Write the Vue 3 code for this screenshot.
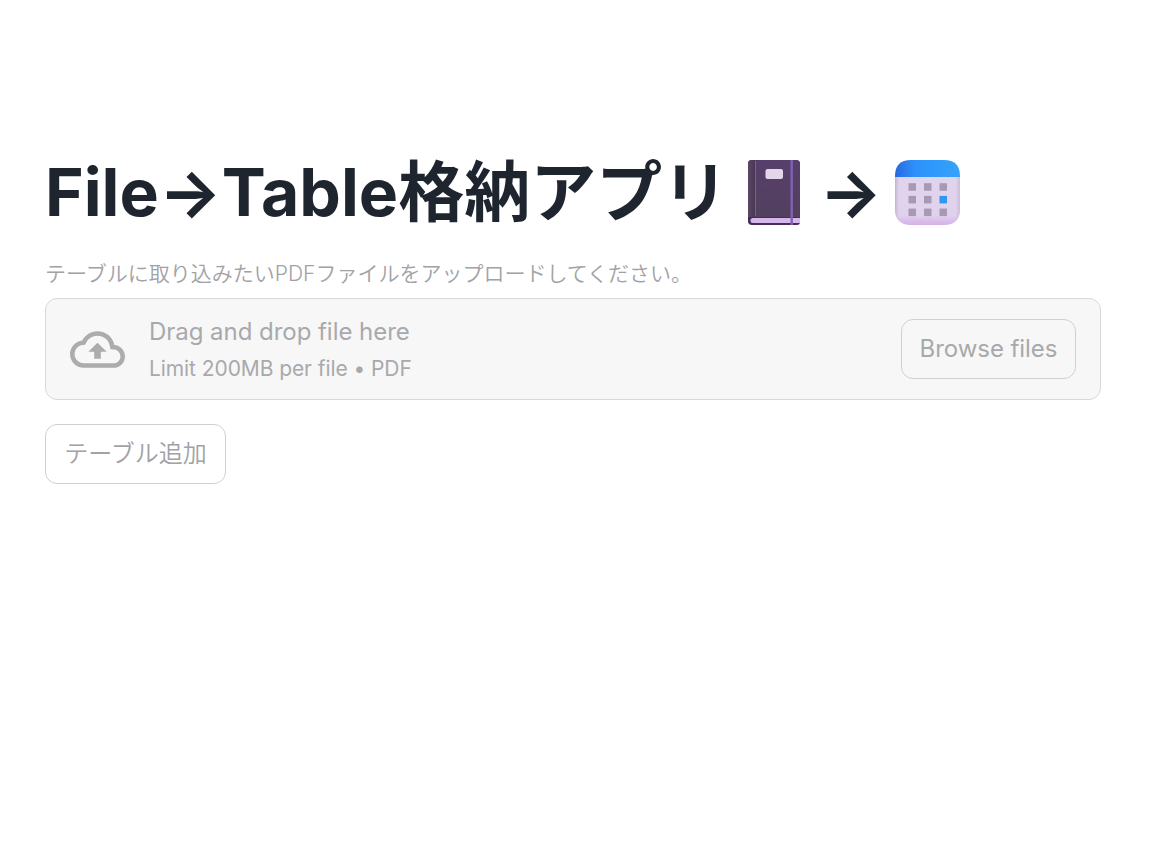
<script setup>
import {ref} from 'vue';

const title = ref('File→Table格納アプリ');
const uploadLabel = ref('テーブルに取り込みたいPDFファイルをアップロードしてください。');

// 달력 아이콘의 날짜 칸
const days = [0, 1, 2, 3, 4, 5, 6, 7, 8].map((i) => ({
  x: 13.5 + (i % 3) * 15.5,
  y: 23.2 + Math.floor(i / 3) * 12.7,
  active: i === 5,
}));
</script>

<template>
  <main class="page">
    <h1 class="title">
      <span>{{ title }}</span>
      <svg class="book" viewBox="0 0 52 65" aria-hidden="true">
        <defs>
          <linearGradient id="cover" x1="0" y1="0" x2="0" y2="1">
            <stop offset="0" stop-color="#573f6c" />
            <stop offset="1" stop-color="#52405e" />
          </linearGradient>
          <linearGradient id="spine" x1="0" y1="0" x2="1" y2="0">
            <stop offset="0" stop-color="#5a4963" />
            <stop offset="1" stop-color="#493654" />
          </linearGradient>
        </defs>
        <path d="M4 0H48Q52 0 52 4V62Q52 65 49 65H4Q0 65 0 61V4Q0 0 4 0Z" fill="#482b5c" />
        <path d="M4 0H48Q52 0 52 4V57H0V4Q0 0 4 0Z" fill="url(#cover)" />
        <path d="M4 0H7V57H0V4Q0 0 4 0Z" fill="url(#spine)" />
        <path d="M7.5 1V56" stroke="#81708b" stroke-width=".8" />
        <path d="M52 58H5Q2.5 58 2.5 60.5T5 63H52Z" fill="#d5b7eb" />
        <rect x="17.5" y="9" width="17.5" height="10" rx="2" fill="#e2d6e9" />
        <path d="M43.7 0V65" stroke="#8260b5" stroke-width="2.4" />
      </svg>
      <span class="arrow">→</span>
      <svg class="calendar" viewBox="0 0 65 65" aria-hidden="true">
        <defs>
          <linearGradient id="header" x1="0" y1="0" x2="1" y2="0">
            <stop offset="0" stop-color="#2868df" />
            <stop offset=".3" stop-color="#2c91fb" />
            <stop offset="1" stop-color="#35a3fb" />
          </linearGradient>
          <linearGradient id="sheet" x1="0" y1="0" x2="0" y2="1">
            <stop offset="0" stop-color="#e0d4ec" />
            <stop offset=".8" stop-color="#e1d2ec" />
            <stop offset="1" stop-color="#d3b1e9" />
          </linearGradient>
          <linearGradient id="edge" x1="0" y1="0" x2="1" y2="0">
            <stop offset="0" stop-color="#a99ab4" stop-opacity=".6" />
            <stop offset=".07" stop-color="#c9bcd4" stop-opacity="0" />
            <stop offset=".93" stop-color="#c9bcd4" stop-opacity="0" />
            <stop offset="1" stop-color="#c9b5d8" stop-opacity=".8" />
          </linearGradient>
        </defs>
        <path d="M0 17H65V49Q65 65 49 65H16Q0 65 0 49Z" fill="url(#sheet)" />
        <path d="M0 17H65V49Q65 65 49 65H16Q0 65 0 49Z" fill="url(#edge)" />
        <path d="M0 17V16Q0 0 16 0H49Q65 0 65 16V17Z" fill="url(#header)" />
        <rect
            v-for="(day, i) in days"
            :key="i"
            :x="day.x"
            :y="day.y"
            width="7.5"
            height="7.5"
            :fill="day.active ? '#3096f2' : '#a799b5'"
        />
      </svg>
    </h1>

    <p class="label">{{ uploadLabel }}</p>

    <section class="dropzone">
      <svg class="cloud" viewBox="0 0 24 24" aria-hidden="true">
        <path d="M19.35 10.04A7.49 7.49 0 0 0 12 4C9.11 4 6.6 5.64 5.35 8.04A5.994 5.994 0 0 0 0 14c0 3.31 2.69 6 6 6h13c2.76 0 5-2.24 5-5 0-2.64-2.05-4.78-4.65-4.96zM19 18H6c-2.21 0-4-1.79-4-4 0-2.05 1.53-3.76 3.56-3.97l1.07-.11.5-.95A5.469 5.469 0 0 1 12 6c2.62 0 4.88 1.86 5.39 4.43l.3 1.5 1.53.11A2.98 2.98 0 0 1 22 15c0 1.65-1.35 3-3 3zM8 13h2.55v3h2.9v-3H16l-4-4-4 4z" />
      </svg>
      <div class="instructions">
        <span class="main-text">Drag and drop file here</span>
        <small class="limit">Limit 200MB per file • PDF</small>
      </div>
      <button class="button browse" disabled>Browse files</button>
    </section>

    <button class="button add" disabled>テーブル追加</button>
  </main>
</template>

<style>
body {
  background: #fff;
}
</style>

<style scoped>
.page {
  box-sizing: border-box;
  padding: 152px 72px 0 45px;
  font-family: Inter, "Noto Sans CJK JP", sans-serif;
  font-weight: 350;
  color: #a1a2a6;
}

.title {
  display: flex;
  align-items: center;
  height: 80px;
  margin: 0;
  font-size: 66px;
  font-weight: 700;
  line-height: 80px;
  color: #1e252f;
  white-space: nowrap;
}

.book {
  width: 52px;
  height: 65px;
  margin-left: 20px;
}

.arrow {
  margin-left: 19px;
}

.calendar {
  width: 65px;
  height: 65px;
  margin-left: 13px;
}

.label {
  height: 32px;
  margin: 26px 0 8px;
  font-size: 21px;
  line-height: 32px;
}

.dropzone {
  display: flex;
  align-items: center;
  box-sizing: border-box;
  height: 102px;
  padding: 0 24px;
  border: 1px solid #d7d8dc;
  border-radius: 12px;
  background: #f7f7f7;
}

.cloud {
  width: 55px;
  height: 55px;
  margin-right: 24px;
  fill: #acacac;
}

.instructions {
  display: flex;
  flex-direction: column;
  flex: 1;
  padding-top: 2px;
  font-weight: 400;
  color: #a8a9ac;
}

.main-text {
  font-size: 24px;
  line-height: 38px;
  letter-spacing: -0.04px;
}

.limit {
  font-size: 21px;
  line-height: 36px;
  letter-spacing: -0.08px;
}

.button {
  box-sizing: border-box;
  height: 60px;
  padding: 0;
  border: 1px solid #cfd0d3;
  border-radius: 12px;
  background: transparent;
  color: inherit;
  font-family: inherit;
  font-size: 24px;
  font-weight: inherit;
  line-height: 38px;
}

.browse {
  width: 175px;
  font-weight: 400;
  letter-spacing: -0.06px;
  color: #a8a9ac;
}

.add {
  display: block;
  width: 181px;
  margin-top: 24px;
}
</style>
